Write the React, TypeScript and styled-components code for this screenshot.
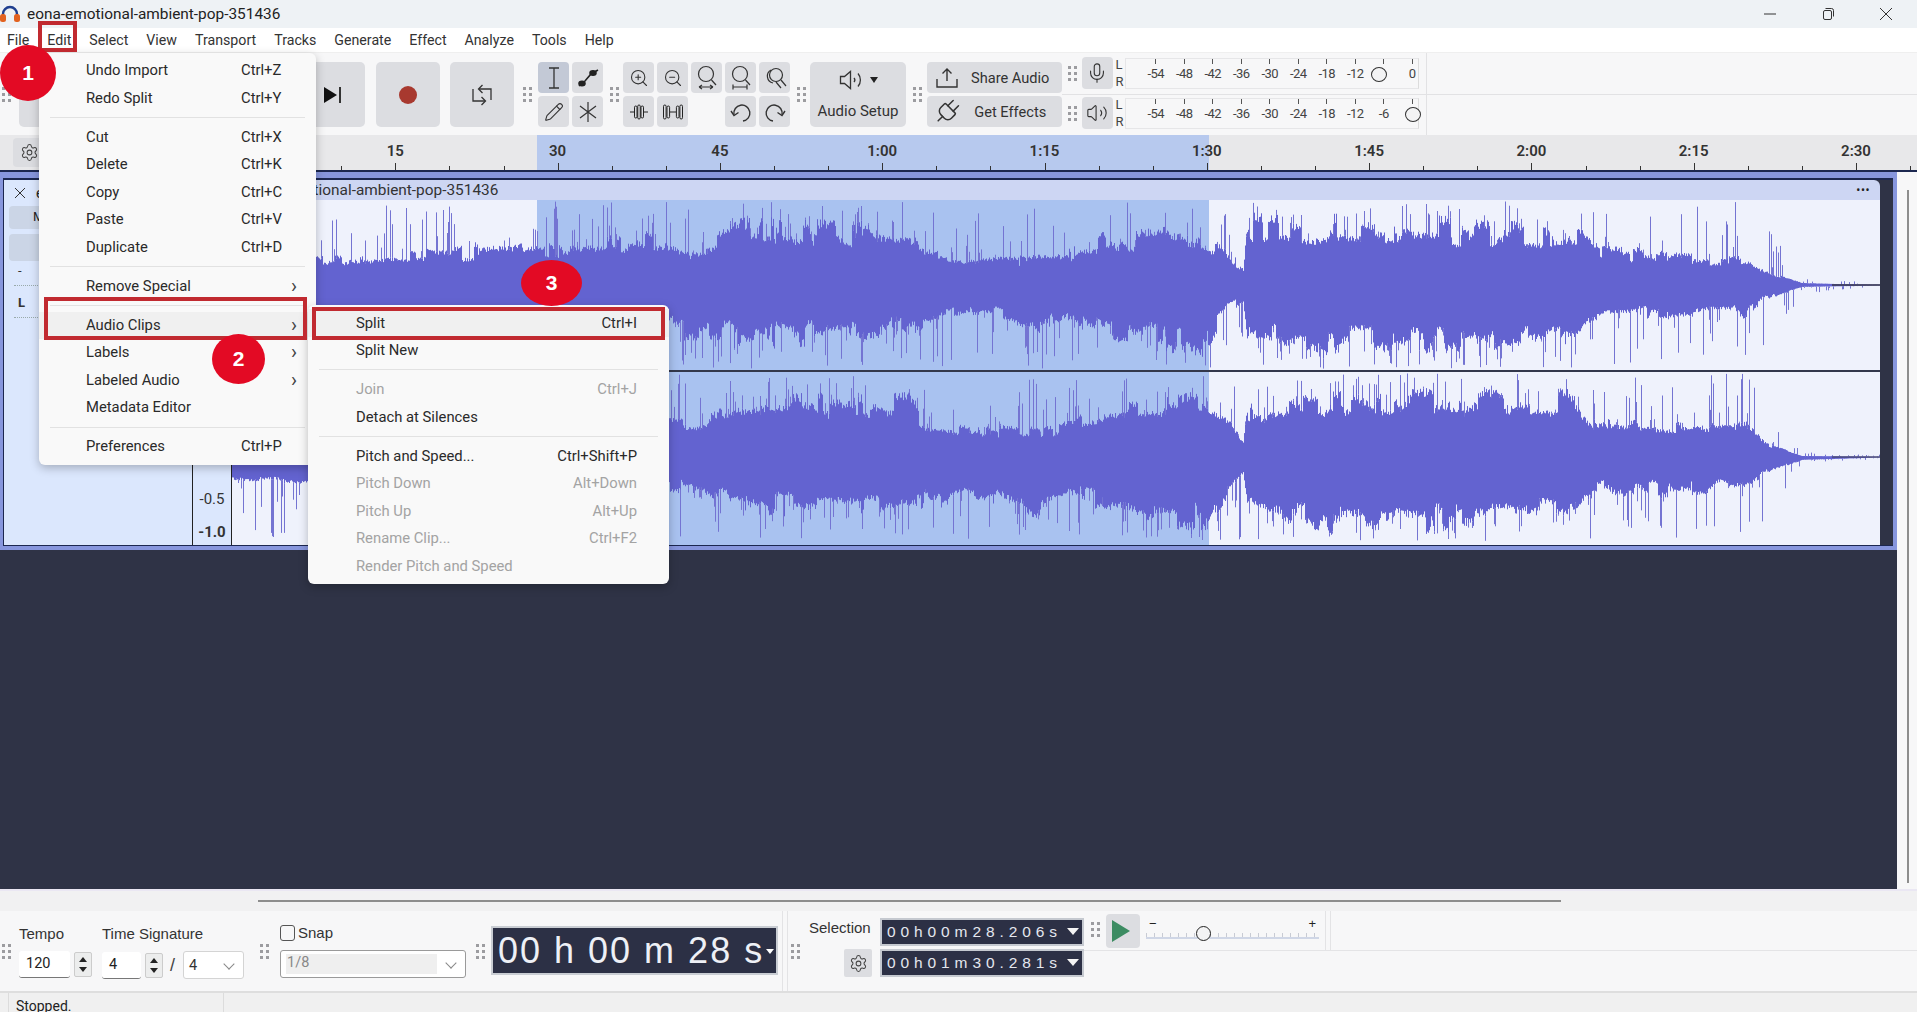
import React, {useMemo} from 'react';
import styled, {createGlobalStyle} from 'styled-components';
import {Mic, Pencil, Plug, Settings, Volume2, ZoomIn, ZoomOut} from 'lucide-react';

const UI_FONT = `Roboto, "Liberation Sans", sans-serif`;

export default function App() {
  return (
    <Page>
      <GlobalStyle/>
      <TitleBar>
        <AppIcon/>
        <TitleText>eona-emotional-ambient-pop-351436</TitleText>
        <WindowControls>
          <WindowButton><svg width="14" height="14" viewBox="0 0 14 14"><path d="M1 7h12" stroke="#333" strokeWidth="1"/></svg></WindowButton>
          <WindowButton><svg width="14" height="14" viewBox="0 0 14 14" fill="none" stroke="#333"><rect x="2.5" y="3.5" width="8" height="9" rx="1.5"/><path d="M4.5 1.5h6a2 2 0 0 1 2 2v6"/></svg></WindowButton>
          <WindowButton><svg width="14" height="14" viewBox="0 0 14 14"><path d="M1 1l12 12M13 1L1 13" stroke="#333" strokeWidth="1"/></svg></WindowButton>
        </WindowControls>
      </TitleBar>

      <MenuBar>
        {menus.map(name => <MenuName key={name}>{name}</MenuName>)}
      </MenuBar>

      <Toolbar>
        <GripCell $start><Grip/></GripCell>
        <Transport>
          <BigButton/><BigButton/><BigButton/>
          <BigButton $push>
            <svg width="22" height="18" viewBox="0 0 22 18"><path d="M2 1l13 8-13 8z" fill="#111"/><path d="M18 1v16" stroke="#333" strokeWidth="2"/></svg>
          </BigButton>
          <BigButton><RecordDot/></BigButton>
          <BigButton><LoopIcon/></BigButton>
        </Transport>
        <GripCell><Grip/></GripCell>
        <ToolGrid>
          <ToolButton $pressed><svg width="14" height="24" viewBox="0 0 14 24" fill="none" stroke="#333" strokeWidth="1.3"><path d="M2 2h10M7 2v20M2 22h10"/></svg></ToolButton>
          <ToolButton><EnvelopeIcon/></ToolButton>
          <ToolButton><Pencil size={20} strokeWidth={1.3} color="#333"/></ToolButton>
          <ToolButton><svg width="20" height="22" viewBox="0 0 20 22" stroke="#333" strokeWidth="1.2"><path d="M10 1v20M2 5l16 12M18 5L2 17"/></svg></ToolButton>
        </ToolGrid>
        <GripCell><Grip/></GripCell>
        <ZoomGrid>
          <ToolButton><ZoomIn size={20} strokeWidth={1.3} color="#333"/></ToolButton>
          <ToolButton><ZoomOut size={20} strokeWidth={1.3} color="#333"/></ToolButton>
          <ToolButton><FitIcon kind="selection"/></ToolButton>
          <ToolButton><FitIcon kind="project"/></ToolButton>
          <ToolButton><ToggleZoomIcon/></ToolButton>
          <ToolButton><TrimIcon/></ToolButton>
          <ToolButton><SilenceIcon/></ToolButton>
          <EmptyTool/>
          <ToolButton><UndoIcon/></ToolButton>
          <ToolButton><UndoIcon $flip/></ToolButton>
        </ZoomGrid>
        <GripCell><Grip/></GripCell>
        <AudioSetup>
          <AudioSetupIcon>
            <SpeakerIcon/>
            <DropCaret/>
          </AudioSetupIcon>
          <span>Audio Setup</span>
        </AudioSetup>
        <GripCell><Grip/></GripCell>
        <ShareGroup>
          <ShareButton>
            <ShareIconSlot>
              <svg width="22" height="22" viewBox="0 0 22 22" fill="none" stroke="#333" strokeWidth="1.4"><path d="M11 2v12M6.5 6.5L11 2l4.5 4.5M1 12v8h20v-8"/></svg>
            </ShareIconSlot>
            <ShareText>Share Audio</ShareText>
          </ShareButton>
          <ShareButton>
            <ShareIconSlot><PlugWrap><Plug size={30} strokeWidth={1.2} color="#333"/></PlugWrap></ShareIconSlot>
            <ShareText>Get Effects</ShareText>
          </ShareButton>
        </ShareGroup>
        <MeterColumn>
          <MeterRow $top>
            <MeterGrip><Grip/></MeterGrip>
            <MeterButton><Mic size={22} strokeWidth={1.2} color="#333"/></MeterButton>
            <Meter labels={recordLabels} knob={1378}/>
          </MeterRow>
          <MeterRow>
            <MeterGrip><Grip/></MeterGrip>
            <MeterButton><Volume2 size={22} strokeWidth={1.2} color="#333"/></MeterButton>
            <Meter labels={playLabels} knob={1412}/>
          </MeterRow>
        </MeterColumn>
      </Toolbar>

      <RulerRow>
        <RulerHead>
          <GearButton><Settings size={19} strokeWidth={1.3} color="#444"/></GearButton>
        </RulerHead>
        <RulerTrack>
          <RulerSelection/>
          {rulerTicks.map(tick => (
            <RulerTick key={tick} $major={tick % 15 === 0} style={{left: tick * PX_PER_SECOND}}/>
          ))}
          {rulerLabels.map(({time, text}) => (
            <RulerLabel key={text} style={{left: time * PX_PER_SECOND}}>{text}</RulerLabel>
          ))}
        </RulerTrack>
      </RulerRow>

      <MainRow>
        <TrackPane>
          <TrackFrame>
            <TrackInner>
              <TrackHead>
                <TrackTitle>
                  <svg width="12" height="12" viewBox="0 0 12 12"><path d="M1 1l10 10M11 1L1 11" stroke="#333" strokeWidth="1"/></svg>
                  <span>eona-emotional</span>
                </TrackTitle>
                <HeadButton>Mute</HeadButton>
                <HeadButton $tall/>
                <HeadSign>-</HeadSign>
                <HeadSlider/>
                <HeadSign $bold>L</HeadSign>
                <HeadSlider/>
              </TrackHead>
              <ScaleColumn>
                <ScaleLabel $h={42}>0.0</ScaleLabel>
                <ScaleLabel $h={33}>-0.5</ScaleLabel>
                <ScaleLabel $h={22} $bold>-1.0</ScaleLabel>
              </ScaleColumn>
              <Clip>
                <ClipHeader>
                  <ClipName>eona-emotional-ambient-pop-351436</ClipName>
                  <ClipDots>•••</ClipDots>
                </ClipHeader>
                <Waveform seed={17} height={170} up={topUp} low={topLow} tailLine={1.6}/>
                <ChannelDivider/>
                <Waveform seed={91} height={173} up={bottomUp} low={bottomLow} tailLine={1}/>
              </Clip>
              <TrackGutter/>
            </TrackInner>
          </TrackFrame>
        </TrackPane>
        <VerticalScroll><VerticalThumb/></VerticalScroll>
      </MainRow>

      <HorizontalScroll><HorizontalThumb/></HorizontalScroll>

      <BottomBar>
        <GripCell $start><Grip/></GripCell>
        <TempoGroup>
          <FieldColumn>
            <FieldLabel>Tempo</FieldLabel>
            <FieldRow>
              <NumberInput $w={51}>120</NumberInput>
              <Spinner/>
            </FieldRow>
          </FieldColumn>
          <FieldColumn>
            <FieldLabel>Time Signature</FieldLabel>
            <FieldRow>
              <NumberInput $w={39}>4</NumberInput>
              <Spinner/>
              <Slash>/</Slash>
              <SelectBox $w={61}><span>4</span><Chevron/></SelectBox>
            </FieldRow>
          </FieldColumn>
        </TempoGroup>
        <GripCell><Grip/></GripCell>
        <SnapGroup>
          <SnapLabel><CheckBox/>Snap</SnapLabel>
          <SelectBox $w={186} $disabled>
            <SnapValue>1/8</SnapValue>
            <Chevron/>
          </SelectBox>
        </SnapGroup>
        <GripCell><Grip/></GripCell>
        <TimeDisplay>
          <span>00 h 00 m 28 s</span>
          <TimeCaret/>
        </TimeDisplay>
        <SeparatorGripCell><Grip/></SeparatorGripCell>
        <SelectionGroup>
          <SelectionLabel>Selection</SelectionLabel>
          <SmallTime>00h00m28.206s<SmallCaret/></SmallTime>
          <SelectionGear><Settings size={19} strokeWidth={1.3} color="#444"/></SelectionGear>
          <SmallTime>00h01m30.281s<SmallCaret/></SmallTime>
        </SelectionGroup>
        <PlayCell>
          <PlayRow>
            <GripSlot><Grip/></GripSlot>
            <PlayButton>
              <svg width="18" height="22" viewBox="0 0 18 22"><path d="M0 0l18 11L0 22z" fill="#3c8c62"/></svg>
            </PlayButton>
            <SpeedSlider>
              <SliderSigns><span>−</span><span>+</span></SliderSigns>
              <SliderLine/>
              <SliderKnob/>
            </SpeedSlider>
            <PlayDivider/>
          </PlayRow>
        </PlayCell>
      </BottomBar>

      <StatusBar>
        <StatusCell>Stopped.</StatusCell>
      </StatusBar>

      <EditMenu>
        {editMenu.map((entry, index) => (
          entry === null ? <MenuSeparator key={index}/> : (
            <EditRow key={entry.label} $active={entry.label === 'Audio Clips'}>
              <span>{entry.label}</span>
              <span>{entry.keys}</span>
              {entry.more && <Arrow>›</Arrow>}
            </EditRow>
          )
        ))}
      </EditMenu>

      <ClipsMenu>
        {clipsMenu.map((entry, index) => (
          entry === null ? <MenuSeparator key={index}/> : (
            <ClipsRow key={entry.label} $active={entry.label === 'Split'} $disabled={entry.disabled}>
              <span>{entry.label}</span>
              <span>{entry.keys}</span>
            </ClipsRow>
          )
        ))}
      </ClipsMenu>

      <RedBox $x={38} $y={21} $w={39} $h={31}/>
      <RedBox $x={44} $y={297} $w={263} $h={43}/>
      <RedBox $x={312} $y={307} $w={353} $h={33}/>
      <StepBadge $x={0} $y={45} $w={56} $h={56}>1</StepBadge>
      <StepBadge $x={212} $y={334} $w={53} $h={50}>2</StepBadge>
      <StepBadge $x={521} $y={260} $w={61} $h={46}>3</StepBadge>
    </Page>
  );
}

const PX_PER_SECOND = 10.82;
const menus = ['File', 'Edit', 'Select', 'View', 'Transport', 'Tracks', 'Generate', 'Effect', 'Analyze', 'Tools', 'Help'];
const recordLabels = ['-54', '-48', '-42', '-36', '-30', '-24', '-18', '-12', '', '0'];
const playLabels = ['-54', '-48', '-42', '-36', '-30', '-24', '-18', '-12', '-6', ''];
const rulerTicks = Array.from({length: 32}, (_, i) => i * 5);
const rulerLabels = [
  {time: 15, text: '15'}, {time: 30, text: '30'}, {time: 45, text: '45'}, {time: 60, text: '1:00'},
  {time: 75, text: '1:15'}, {time: 90, text: '1:30'}, {time: 105, text: '1:45'}, {time: 120, text: '2:00'},
  {time: 135, text: '2:15'}, {time: 150, text: '2:30'},
];

interface MenuEntry {
  label: string;
  keys?: string;
  more?: boolean;
  disabled?: boolean;
}

const editMenu: (MenuEntry | null)[] = [
  {label: 'Undo Import', keys: 'Ctrl+Z'},
  {label: 'Redo Split', keys: 'Ctrl+Y'},
  null,
  {label: 'Cut', keys: 'Ctrl+X'},
  {label: 'Delete', keys: 'Ctrl+K'},
  {label: 'Copy', keys: 'Ctrl+C'},
  {label: 'Paste', keys: 'Ctrl+V'},
  {label: 'Duplicate', keys: 'Ctrl+D'},
  null,
  {label: 'Remove Special', more: true},
  null,
  {label: 'Audio Clips', more: true},
  {label: 'Labels', more: true},
  {label: 'Labeled Audio', more: true},
  {label: 'Metadata Editor'},
  null,
  {label: 'Preferences', keys: 'Ctrl+P'},
];

const clipsMenu: (MenuEntry | null)[] = [
  {label: 'Split', keys: 'Ctrl+I'},
  {label: 'Split New'},
  null,
  {label: 'Join', keys: 'Ctrl+J', disabled: true},
  {label: 'Detach at Silences'},
  null,
  {label: 'Pitch and Speed...', keys: 'Ctrl+Shift+P'},
  {label: 'Pitch Down', keys: 'Alt+Down', disabled: true},
  {label: 'Pitch Up', keys: 'Alt+Up', disabled: true},
  {label: 'Rename Clip...', keys: 'Ctrl+F2', disabled: true},
  {label: 'Render Pitch and Speed', disabled: true},
];

type Envelope = [number, number][];

// amplitude of the solid part of the wave, [page x, px from the centre line]
const topUp: Envelope = [[232, 20], [317, 26], [400, 28], [490, 38], [580, 38], [640, 48], [700, 38], [739, 58], [778, 60], [855, 58], [910, 52], [925, 35], [987, 25], [1049, 28], [1073, 32], [1077, 45], [1166, 50], [1212, 42], [1228, 32], [1243, 18], [1246, 62], [1321, 60], [1437, 58], [1577, 53], [1593, 38], [1670, 30], [1748, 27], [1764, 15], [1802, 2], [1834, 1], [1880, 0.5]];
const topLow: Envelope = [[232, 25], [400, 35], [600, 45], [700, 48], [739, 55], [855, 52], [917, 45], [933, 32], [987, 25], [1034, 45], [1073, 28], [1088, 45], [1205, 62], [1228, 25], [1243, 15], [1247, 48], [1321, 62], [1476, 58], [1577, 52], [1593, 32], [1748, 28], [1764, 15], [1802, 2], [1880, 0.5]];
const bottomUp: Envelope = [[232, 20], [400, 28], [600, 36], [700, 34], [739, 57], [855, 57], [910, 54], [925, 34], [987, 27], [1049, 27], [1073, 34], [1088, 44], [1197, 60], [1228, 40], [1243, 16], [1246, 50], [1321, 54], [1399, 60], [1577, 57], [1593, 34], [1748, 30], [1764, 14], [1802, 1], [1880, 0.5]];
const bottomLow: Envelope = [[232, 22], [400, 30], [600, 38], [700, 33], [739, 49], [855, 59], [933, 46], [964, 33], [1034, 59], [1073, 39], [1205, 72], [1228, 33], [1243, 16], [1247, 46], [1321, 66], [1476, 69], [1577, 59], [1593, 36], [1748, 33], [1764, 16], [1802, 3], [1880, 0.5]];

function sample(envelope: Envelope, x: number) {
  for (let i = 1; i < envelope.length; i++) {
    const [x0, a0] = envelope[i - 1];
    const [x1, a1] = envelope[i];
    if (x <= x1) {
      return a0 + (a1 - a0) * (x - x0) / (x1 - x0);
    }
  }
  return envelope[envelope.length - 1][1];
}

function seeded(seed: number) {
  let state = seed;
  return () => {
    state = (state * 1664525 + 1013904223) % 4294967296;
    return state / 4294967296;
  };
}

const CLIP_LEFT = 232;
const CLIP_WIDTH = 1648;
const SELECT_FROM = 537 - CLIP_LEFT;
const SELECT_TO = 1209 - CLIP_LEFT;

interface WaveformProp {
  seed: number;
  height: number;
  up: Envelope;
  low: Envelope;
  tailLine: number;
}

function Waveform({seed, height, up, low, tailLine}: WaveformProp) {
  const center = 85;
  const {body, spikes} = useMemo(() => {
    const random = seeded(seed);
    let bodyPath = '';
    let spikePath = '';
    let upGust = 1;
    let lowGust = 1;
    for (let i = 0; i < CLIP_WIDTH; i++) {
      const pageX = CLIP_LEFT + i;
      // slow swings every few px give the jagged outline
      if (random() < 0.14) upGust = 0.7 + 0.42 * random();
      if (random() < 0.14) lowGust = 0.7 + 0.42 * random();
      const a = sample(up, pageX);
      const b = sample(low, pageX);
      const settled = Math.min(1, a / 12);
      const upFactor = 1 - settled + settled * upGust;
      const lowFactor = 1 - settled + settled * lowGust;
      const top = center - a * upFactor * (0.92 + 0.16 * random());
      const bottom = center + b * lowFactor * (0.92 + 0.16 * random());
      bodyPath += `M${i + 0.5} ${top.toFixed(1)}V${bottom.toFixed(1)}`;
      const reach = Math.min(1, a / 22);
      if (random() < 0.17) {
        const length = Math.pow(random(), 1.1) * (84 - center + top) * reach;
        spikePath += `M${i + 0.5} ${(top - length).toFixed(1)}V${top.toFixed(1)}`;
      }
      if (random() < 0.17) {
        const length = Math.pow(random(), 1.1) * (84 + center - bottom) * reach;
        spikePath += `M${i + 0.5} ${bottom.toFixed(1)}V${(bottom + length).toFixed(1)}`;
      }
    }
    return {body: bodyPath, spikes: spikePath};
  }, [seed, up, low]);

  return (
    <WaveSvg width={CLIP_WIDTH} height={height} viewBox={`0 0 ${CLIP_WIDTH} ${height}`}>
      <rect width={CLIP_WIDTH} height={height} fill="#eff2fc"/>
      <rect x={SELECT_FROM} width={SELECT_TO - SELECT_FROM} height={height} fill="#a9c2f0"/>
      <path d={spikes} stroke="#7474d2" strokeWidth="1" fill="none"/>
      <path d={body} stroke="#6363d0" strokeWidth="1" fill="none"/>
      <path d={`M1600 ${center}H${CLIP_WIDTH}`} stroke="#3a3a4a" strokeWidth={tailLine} fill="none"/>
    </WaveSvg>
  );
}

function Grip() {
  return <GripDots>{Array.from({length: 6}, (_, i) => <i key={i}/>)}</GripDots>;
}

function Meter({labels, knob}: {labels: string[]; knob: number}) {
  return (
    <>
      <MeterSides><span>L</span><span>R</span></MeterSides>
      <MeterBox>
        <MeterScale>
          {labels.map((text, i) => (
            <MeterMark key={i}>
              <i/>
              <span>{text}</span>
            </MeterMark>
          ))}
        </MeterScale>
        <MeterKnob style={{left: knob - 1125 - 8}}/>
      </MeterBox>
    </>
  );
}

function AppIcon() {
  return (
    <svg width="20" height="18" viewBox="0 0 20 18" fill="none">
      <path d="M3 12V9a7 7 0 0 1 14 0v3" stroke="#1f3f8f" strokeWidth="2.4"/>
      <rect x="0" y="9" width="6" height="8" rx="2.5" fill="#e2621f"/>
      <rect x="14" y="9" width="6" height="8" rx="2.5" fill="#e2621f"/>
    </svg>
  );
}

function LoopIcon() {
  return (
    <svg width="20" height="22" viewBox="0 0 20 22" fill="none" stroke="#333" strokeWidth="1.3">
      <path d="M7 5H19V16"/>
      <path d="M10.5 1L6.5 5l4 4"/>
      <path d="M1 5V17H13"/>
      <path d="M9.5 13l4 4-4 4"/>
    </svg>
  );
}

function EnvelopeIcon() {
  return (
    <svg width="24" height="20" viewBox="0 0 24 20" stroke="#222" strokeWidth="1.6" fill="#222">
      <path d="M3 18L9 13L15 6L22 2" fill="none"/>
      <ellipse cx="6" cy="15.5" rx="3" ry="2.2"/>
      <ellipse cx="17" cy="5" rx="3" ry="2.2"/>
    </svg>
  );
}

function FitIcon({kind}: {kind: 'selection' | 'project'}) {
  return (
    <svg width="22" height="26" viewBox="0 0 22 26" fill="none" stroke="#333" strokeWidth="1.2">
      <circle cx="10" cy="9" r="7.5"/>
      <path d="M15.5 15l4.5 5"/>
      {kind === 'selection'
        ? <path d="M3 22h14M3 22l3-2M3 22l3 2M17 22l-3-2M17 22l-3 2"/>
        : <path d="M3 19.5v5M3 22h14M17 19.5v5"/>}
    </svg>
  );
}

function ToggleZoomIcon() {
  return (
    <svg width="24" height="24" viewBox="0 0 24 24" fill="none" stroke="#333" strokeWidth="1.2">
      <circle cx="13" cy="9" r="6.5"/>
      <path d="M8 4a7 7 0 0 0 2 13M18 14l5 6M13 16l5 6"/>
    </svg>
  );
}

function TrimIcon() {
  return (
    <svg width="20" height="16" viewBox="0 0 20 16" fill="none" stroke="#222" strokeWidth="1">
      <path d="M1 8h4M15 8h4"/>
      <rect x="5.5" y="2" width="2.5" height="12" rx="1.2"/>
      <rect x="8.75" y="1" width="2.5" height="14" rx="1.2"/>
      <rect x="12" y="2" width="2.5" height="12" rx="1.2"/>
    </svg>
  );
}

function SilenceIcon() {
  return (
    <svg width="22" height="16" viewBox="0 0 22 16" fill="none" stroke="#222" strokeWidth="1">
      <path d="M8 8h6"/>
      <rect x="1.5" y="1" width="2.6" height="14" rx="1.3"/>
      <rect x="5" y="2" width="2.6" height="12" rx="1.3"/>
      <rect x="14.4" y="2" width="2.6" height="12" rx="1.3"/>
      <rect x="17.9" y="1" width="2.6" height="14" rx="1.3"/>
    </svg>
  );
}

function UndoIcon({$flip}: {$flip?: boolean}) {
  return (
    <FlipSvg $flip={$flip} width="22" height="22" viewBox="0 0 22 22" fill="none" stroke="#333" strokeWidth="1.4">
      <path d="M4 13.5A8 8 0 1 1 13 20"/>
      <path d="M1 10l3 4.5 4.5-3"/>
    </FlipSvg>
  );
}

function SpeakerIcon() {
  return (
    <svg width="26" height="20" viewBox="0 0 26 20" fill="none" stroke="#333" strokeWidth="1.3">
      <path d="M1.5 6.5v7h4l6 5V1.5l-6 5z"/>
      <path d="M15 8a3 3 0 0 1 0 4M19 3.5a10 10 0 0 1 0 13"/>
    </svg>
  );
}

const GlobalStyle = createGlobalStyle`
  html, body {
    margin: 0;
    padding: 0;
    background: #f7f7f8;
    overflow: hidden;
  }
  * {
    box-sizing: border-box;
  }
`;

const Page = styled.div`
  position: relative;
  width: 1917px;
  height: 1012px;
  overflow: hidden;
  display: flex;
  flex-direction: column;
  font-family: ${UI_FONT};
  font-size: 15px;
  color: #222;
`;

const TitleBar = styled.div`
  height: 28px;
  flex: none;
  display: flex;
  align-items: center;
  gap: 7px;
  background: #eef2f5;
`;

const TitleText = styled.span`
  font-size: 15.4px;
  color: #222;
`;

const WindowControls = styled.div`
  margin-left: auto;
  display: flex;
`;

const WindowButton = styled.div`
  width: 58px;
  height: 28px;
  display: flex;
  align-items: center;
  justify-content: center;
  transform: translateX(-2px);
`;

const MenuBar = styled.div`
  height: 24px;
  flex: none;
  display: flex;
  align-items: center;
  gap: 18px;
  padding-left: 7px;
  background: #fff;
`;

const MenuName = styled.span`
  font-size: 14.2px;
  color: #333;
`;

const Toolbar = styled.div`
  height: 83px;
  flex: none;
  display: grid;
  grid-template-columns: 19px 495px 24px 65px 20px 166px 21px 96px 20.5px 135.5px 1fr;
  background: #f7f7f8;
  border-top: 1px solid #efefef;
`;

const GripCell = styled.div<{$start?: boolean}>`
  display: flex;
  align-items: center;
  justify-content: ${props => props.$start ? 'flex-start' : 'center'};
  padding-left: ${props => props.$start ? '2px' : '3px'};
`;

const GripDots = styled.span`
  display: grid;
  grid-template-columns: 3px 3px;
  gap: 3px;
  > i {
    width: 3px;
    height: 3px;
    background: #9c9ca0;
  }
`;

const Transport = styled.div`
  display: flex;
  gap: 10.5px;
  margin-top: 9px;
  height: 65px;
`;

const BigButton = styled.div<{$push?: boolean}>`
  width: 64px;
  height: 65px;
  border-radius: 5px;
  background: #dcdde1;
  display: flex;
  align-items: center;
  justify-content: center;
  margin-left: ${props => props.$push ? 'auto' : '0'};
`;

const RecordDot = styled.span`
  width: 18px;
  height: 18px;
  border-radius: 50%;
  background: #a8392f;
`;

const ToolGrid = styled.div`
  display: grid;
  grid-template-columns: 31px 31px;
  grid-auto-rows: 31px;
  gap: 3px;
  margin-top: 9px;
  align-self: start;
`;

const ZoomGrid = styled(ToolGrid)`
  grid-template-columns: repeat(5, 31px);
`;

const ToolButton = styled.div<{$pressed?: boolean}>`
  border-radius: 4px;
  background: ${props => props.$pressed ? '#c3c9d6' : '#dcdde1'};
  display: flex;
  align-items: center;
  justify-content: center;
`;

const EmptyTool = styled.div``;

const FlipSvg = styled.svg<{$flip?: boolean}>`
  transform: ${props => props.$flip ? 'scaleX(-1)' : 'none'};
`;

const AudioSetup = styled.div`
  margin-top: 9px;
  height: 65px;
  border-radius: 5px;
  background: #dcdde1;
  display: flex;
  flex-direction: column;
  align-items: center;
  justify-content: space-between;
  padding: 8px 0 7px;
  font-size: 15px;
  color: #333;
`;

const AudioSetupIcon = styled.div`
  display: flex;
  align-items: center;
  gap: 5px;
`;

const DropCaret = styled.span`
  width: 0;
  height: 0;
  border-left: 4px solid transparent;
  border-right: 4px solid transparent;
  border-top: 6px solid #222;
`;

const ShareGroup = styled.div`
  margin-top: 9px;
  display: grid;
  grid-auto-rows: 31px;
  gap: 3px;
  align-self: start;
`;

const ShareButton = styled.div`
  border-radius: 4px;
  background: #dcdde1;
  display: flex;
  align-items: center;
  padding-left: 8px;
  font-size: 14.6px;
  color: #333;
`;

const ShareIconSlot = styled.span`
  width: 24px;
  height: 26px;
  flex: none;
  display: flex;
  align-items: center;
  justify-content: center;
`;

const ShareText = styled.span`
  flex: 1;
  text-align: center;
`;

const PlugWrap = styled.span`
  display: flex;
  transform: rotate(45deg);
`;

const MeterColumn = styled.div`
  display: grid;
  grid-template-rows: 42px 40px;
`;

const MeterRow = styled.div<{$top?: boolean}>`
  display: flex;
  align-items: flex-start;
  padding-top: ${props => props.$top ? '4px' : '2px'};
  border-bottom: ${props => props.$top ? '1px solid #e2e2e4' : 'none'};
  background: linear-gradient(#e2e2e4, #e2e2e4) 364px 0 / 1px 100% no-repeat;
`;

const MeterGrip = styled.div`
  width: 20px;
  height: 32px;
  display: flex;
  align-items: center;
  justify-content: center;
`;

const MeterButton = styled.div`
  width: 30.5px;
  height: 32px;
  border-radius: 4px;
  background: #dcdde1;
  display: flex;
  align-items: center;
  justify-content: center;
`;

const MeterSides = styled.div`
  width: 12.5px;
  height: 32px;
  display: flex;
  flex-direction: column;
  justify-content: space-between;
  padding-left: 3px;
  font-size: 13px;
  line-height: 15px;
  color: #444;
`;

const MeterBox = styled.div`
  position: relative;
  width: 294px;
  height: 31px;
  border: 1px solid #e6e6e8;
  padding-left: 15.5px;
  margin-top: 1px;
  margin-right: 7px;
  border-right: 1px solid #dcdcdc;
`;

const MeterScale = styled.div`
  display: flex;
`;

const MeterMark = styled.div`
  width: 28.5px;
  flex: none;
  display: flex;
  flex-direction: column;
  align-items: center;
  font-size: 13px;
  letter-spacing: -0.5px;
  color: #444;
  > i {
    width: 1px;
    height: 5px;
    background: #555;
  }
  > span {
    margin-top: 2px;
    line-height: 16px;
    height: 16px;
  }
`;

const MeterKnob = styled.span`
  position: absolute;
  top: 8px;
  width: 16px;
  height: 15px;
  border-radius: 50%;
  border: 1.4px solid #333;
  background: #f3f3f4;
`;

const RulerRow = styled.div`
  height: 37px;
  flex: none;
  display: flex;
  background: #e8e8ea;
  border-bottom: 2px solid #1c2750;
`;

const RulerHead = styled.div`
  width: 233px;
  flex: none;
  padding: 3px 0 0 13px;
`;

const GearButton = styled.div`
  width: 34px;
  height: 29px;
  border-radius: 4px;
  background: #dcdde1;
  display: flex;
  align-items: center;
  padding-left: 7px;
`;

const RulerTrack = styled.div`
  position: relative;
  flex: 1;
`;

const RulerSelection = styled.div`
  position: absolute;
  top: 0;
  bottom: 0;
  left: ${537 - 233}px;
  width: ${1209 - 537}px;
  background: #b7c9ee;
`;

const RulerTick = styled.span<{$major?: boolean}>`
  position: absolute;
  bottom: 0;
  width: 1px;
  height: ${props => props.$major ? 7 : 4}px;
  background: #333;
`;

const RulerLabel = styled.span`
  position: absolute;
  top: 8px;
  transform: translateX(-50%);
  font-size: 15px;
  line-height: 17px;
  font-weight: 600;
  color: #333;
`;

const MainRow = styled.div`
  height: 717px;
  flex: none;
  display: flex;
`;

const TrackPane = styled.div`
  flex: 1;
  background: #2f3346;
`;

const TrackFrame = styled.div`
  height: 378px;
  border: solid #8796dd;
  border-width: 6px 4px 4px 3px;
`;

const TrackInner = styled.div`
  height: 100%;
  display: flex;
  border-top: 2px solid #1c2750;
  border-left: 1px solid #1c2750;
  border-bottom: 1px solid #1c2750;
  background: #2f3346;
`;

const TrackHead = styled.div`
  width: 188px;
  flex: none;
  background: #dbe7fd;
  padding: 3px 0 0 5px;
  display: flex;
  flex-direction: column;
`;

const TrackTitle = styled.div`
  display: flex;
  align-items: center;
  gap: 10px;
  padding-left: 5px;
  height: 20px;
  font-size: 14px;
`;

const HeadButton = styled.div<{$tall?: boolean}>`
  width: 178px;
  height: ${props => props.$tall ? 27 : 23}px;
  margin-top: ${props => props.$tall ? 5 : 3}px;
  border-radius: 4px;
  background: #cbd5e6;
  font-size: 13px;
  text-align: left;
  padding: 3px 0 0 24px;
`;

const HeadSign = styled.div<{$bold?: boolean}>`
  margin: ${props => props.$bold ? '10px' : '3px'} 0 0 9px;
  font-size: 13px;
  line-height: 14px;
  font-weight: ${props => props.$bold ? 700 : 400};
  color: #333;
`;

const HeadSlider = styled.div`
  width: 170px;
  margin: 5px 0 0 5px;
  height: 3px;
  border-bottom: 1px dotted #9aa;
`;

const ScaleColumn = styled.div`
  width: 40px;
  flex: none;
  background: #dbe7fd;
  border-left: 1.5px solid #222;
  border-right: 1.5px solid #222;
  display: flex;
  flex-direction: column;
  justify-content: flex-end;
`;

const ScaleLabel = styled.div<{$h: number; $bold?: boolean}>`
  height: ${props => props.$h}px;
  display: flex;
  justify-content: center;
  align-items: flex-start;
  font-size: 15px;
  line-height: 18px;
  font-weight: ${props => props.$bold ? 700 : 400};
  color: #333;
`;

const Clip = styled.div`
  width: ${CLIP_WIDTH}px;
  flex: none;
  display: flex;
  flex-direction: column;
  border-top-right-radius: 6px;
  overflow: hidden;
`;

const ClipHeader = styled.div`
  height: 20px;
  flex: none;
  background: #cdd6f3;
  display: flex;
  align-items: center;
  justify-content: space-between;
  padding: 0 10px 0 13px;
`;

const ClipName = styled.span`
  font-size: 15.4px;
  color: #333;
`;

const ClipDots = styled.span`
  font-size: 12px;
  letter-spacing: 0.5px;
  color: #222;
`;

const WaveSvg = styled.svg`
  display: block;
  flex: none;
`;

const ChannelDivider = styled.div`
  height: 2px;
  flex: none;
  background: #33384c;
`;

const TrackGutter = styled.div`
  flex: 1;
`;

const VerticalScroll = styled.div`
  width: 20px;
  flex: none;
  background: #f7f7f8;
  padding: 18px 0 6px 10px;
`;

const VerticalThumb = styled.div`
  width: 2px;
  height: 100%;
  background: #8d8d8d;
`;

const HorizontalScroll = styled.div`
  height: 22px;
  flex: none;
  background: #f1f1f2;
  border-top: 2px solid #eae7f3;
  padding: 9px 356px 0 258px;
`;

const HorizontalThumb = styled.div`
  height: 2px;
  background: #8d8d8d;
`;

const BottomBar = styled.div`
  height: 80px;
  flex: none;
  display: grid;
  grid-template-columns: 19px 226px 35px 186px 25px 287px 31px 275px 1fr;
  background: #f7f7f8;
  font-family: "Liberation Sans", sans-serif;
`;

const TempoGroup = styled.div`
  display: flex;
  gap: 10px;
  padding-top: 14px;
`;

const FieldColumn = styled.div`
  display: flex;
  flex-direction: column;
`;

const FieldLabel = styled.span`
  height: 26px;
  font-size: 15px;
  line-height: 18px;
  color: #333;
`;

const FieldRow = styled.div`
  display: flex;
  align-items: center;
  gap: 4px;
`;

const NumberInput = styled.div<{$w: number}>`
  width: ${props => props.$w}px;
  height: 27px;
  padding: 4px 0 0 7px;
  background: #fff;
  border-bottom: 1px solid #777;
  border-radius: 3px;
  font-family: ${UI_FONT};
  font-size: 14.5px;
  line-height: 18px;
`;

const Spinner = styled.span`
  position: relative;
  width: 18px;
  height: 25px;
  background: #eceded;
  border: 1px solid #ccc;
  border-radius: 2px;
  &::before, &::after {
    content: '';
    position: absolute;
    left: 4px;
    border-left: 4px solid transparent;
    border-right: 4px solid transparent;
  }
  &::before {
    top: 4px;
    border-bottom: 5px solid #222;
  }
  &::after {
    bottom: 4px;
    border-top: 5px solid #222;
  }
`;

const Slash = styled.span`
  width: 13px;
  margin-left: -1px;
  text-align: center;
  font-size: 18px;
  color: #444;
`;

const SelectBox = styled.div<{$w: number; $disabled?: boolean}>`
  width: ${props => props.$w}px;
  height: 28px;
  display: flex;
  align-items: center;
  justify-content: space-between;
  padding: 0 7px 0 5px;
  background: #fff;
  border: 1px solid ${props => props.$disabled ? '#9a9a9a' : '#d4d4d4'};
  border-radius: 3px;
  font-family: ${UI_FONT};
  font-size: 14.5px;
  color: #333;
`;

const Chevron = styled.i`
  width: 8px;
  height: 8px;
  margin: -3px 3px 0 0;
  border-right: 1px solid #888;
  border-bottom: 1px solid #888;
  transform: rotate(45deg);
`;

const SnapGroup = styled.div`
  padding-top: 14px;
`;

const SnapLabel = styled.div`
  height: 25px;
  display: flex;
  align-items: flex-start;
  gap: 3px;
  font-size: 15px;
  line-height: 16px;
  color: #333;
`;

const CheckBox = styled.span`
  width: 15px;
  height: 16px;
  border: 1px solid #555;
  border-radius: 3px;
  background: #f7f7f8;
`;

const SnapValue = styled.span`
  flex: 1;
  height: 20px;
  margin-right: 10px;
  padding-left: 1px;
  background: #efefef;
  color: #888;
`;

const TimeDisplay = styled.div`
  position: relative;
  width: 287px;
  height: 49px;
  margin-top: 15px;
  border: 2px solid #c9cdd3;
  background: #2c3045;
  color: #eef0f6;
  font-size: 36px;
  line-height: 45px;
  letter-spacing: 2px;
  padding-left: 5px;
  white-space: pre;
`;

const TimeCaret = styled.i`
  position: absolute;
  right: 2px;
  top: 21px;
  border-left: 4px solid transparent;
  border-right: 4px solid transparent;
  border-top: 5px solid #fff;
`;

const SeparatorGripCell = styled.div`
  display: flex;
  align-items: center;
  justify-content: center;
  padding-left: 4px;
  background:
    linear-gradient(#e3e3e5, #e3e3e5) 4px 0 / 1px 100% no-repeat,
    linear-gradient(#e3e3e5, #e3e3e5) 9px 0 / 1px 100% no-repeat;
`;

const SelectionGroup = styled.div`
  display: grid;
  grid-template-columns: 71px 204px;
  grid-auto-rows: 28px;
  row-gap: 3px;
  padding-top: 7px;
  font-size: 15px;
`;

const SelectionLabel = styled.span`
  padding-top: 1px;
  color: #333;
`;

const SelectionGear = styled.div`
  width: 28px;
  margin-left: 35px;
  background: #dcdde1;
  border-radius: 2px;
  display: flex;
  align-items: center;
  justify-content: center;
`;

const SmallTime = styled.div`
  position: relative;
  border: 2px solid #c5c9d0;
  background: #2c3045;
  color: #e4e7ef;
  font-size: 15.5px;
  line-height: 24px;
  letter-spacing: 4.9px;
  padding-left: 5px;
`;

const SmallCaret = styled.i`
  position: absolute;
  right: 3px;
  top: 8px;
  border-left: 6px solid transparent;
  border-right: 6px solid transparent;
  border-top: 7px solid #f4f4f4;
`;

const PlayCell = styled.div`
  height: 40px;
  border-bottom: 1px solid #e4e4e6;
`;

const PlayRow = styled.div`
  display: flex;
  height: 100%;
  padding-top: 3px;
`;

const GripSlot = styled.div`
  width: 22px;
  height: 30px;
  display: flex;
  align-items: center;
  justify-content: center;
`;

const PlayButton = styled.div`
  width: 34px;
  height: 34px;
  border-radius: 4px;
  background: #dcdde1;
  display: flex;
  align-items: center;
  justify-content: center;
  padding-right: 5px;
`;

const SpeedSlider = styled.div`
  position: relative;
  width: 173px;
  margin-left: 6px;
  padding-top: 3px;
`;

const SliderSigns = styled.div`
  display: flex;
  justify-content: space-between;
  padding: 0 3px;
  font-size: 13px;
  line-height: 14px;
  color: #222;
`;

const SliderLine = styled.div`
  height: 6px;
  margin-top: 2px;
  border-bottom: 2px solid #cfd6e6;
  background: repeating-linear-gradient(90deg, #c8cbd4 0 1px, transparent 1px 8px);
`;

const SliderKnob = styled.span`
  position: absolute;
  left: 50px;
  top: 12px;
  width: 15px;
  height: 15px;
  border-radius: 50%;
  border: 1.5px solid #222;
  background: #f3f3f4;
`;

const PlayDivider = styled.div`
  width: 6px;
  margin: -3px 0 0 6px;
  border-left: 1px solid #e3e3e5;
  border-right: 1px solid #e3e3e5;
`;

const StatusBar = styled.div`
  flex: 1;
  display: flex;
  background: #f0f0f0;
  border-top: 2px solid #dedede;
  padding-left: 8px;
  overflow: hidden;
`;

const StatusCell = styled.div`
  width: 216px;
  padding: 4px 0 0 7px;
  border-left: 1px solid #dcdcdc;
  border-right: 1px solid #dcdcdc;
  font-size: 14px;
  line-height: 18px;
  color: #222;
`;

const MenuPanel = styled.div`
  position: absolute;
  padding: 4px 0;
  background: #f9f9f9;
  border-radius: 6px;
  box-shadow: 0 3px 10px rgba(0, 0, 0, 0.25);
  font-size: 14.8px;
  color: #2a2a2a;
`;

const EditMenu = styled(MenuPanel)`
  left: 39px;
  top: 53px;
  width: 277px;
`;

const ClipsMenu = styled(MenuPanel)`
  left: 308px;
  top: 305px;
  width: 361px;
`;

const MenuSeparator = styled.div`
  height: 1px;
  margin: 5px 11px 5.5px;
  background: #e2e2e2;
`;

const EditRow = styled.div<{$active?: boolean}>`
  height: 27.5px;
  display: grid;
  grid-template-columns: 155px 1fr 25px;
  align-items: center;
  padding: 0 0 1px 47px;
  background: ${props => props.$active ? '#f0f0f0' : 'transparent'};
`;

const Arrow = styled.span`
  grid-column: 3;
  font-size: 20px;
  line-height: 20px;
  color: #444;
`;

const ClipsRow = styled.div<{$active?: boolean; $disabled?: boolean}>`
  height: 27.5px;
  display: flex;
  align-items: center;
  justify-content: space-between;
  padding: 0 32px 0 48px;
  background: ${props => props.$active ? '#f0f0f0' : 'transparent'};
  color: ${props => props.$disabled ? '#a3a3a3' : '#2a2a2a'};
`;

const RedBox = styled.div<{$x: number; $y: number; $w: number; $h: number}>`
  position: absolute;
  left: ${props => props.$x}px;
  top: ${props => props.$y}px;
  width: ${props => props.$w}px;
  height: ${props => props.$h}px;
  border: 4px solid #c12a30;
`;

const StepBadge = styled.div<{$x: number; $y: number; $w: number; $h: number}>`
  position: absolute;
  left: ${props => props.$x}px;
  top: ${props => props.$y}px;
  width: ${props => props.$w}px;
  height: ${props => props.$h}px;
  border-radius: 50%;
  background: #e30a24;
  color: #fff;
  display: flex;
  align-items: center;
  justify-content: center;
  font-family: "Liberation Sans", sans-serif;
  font-size: 21px;
  font-weight: 700;
`;
